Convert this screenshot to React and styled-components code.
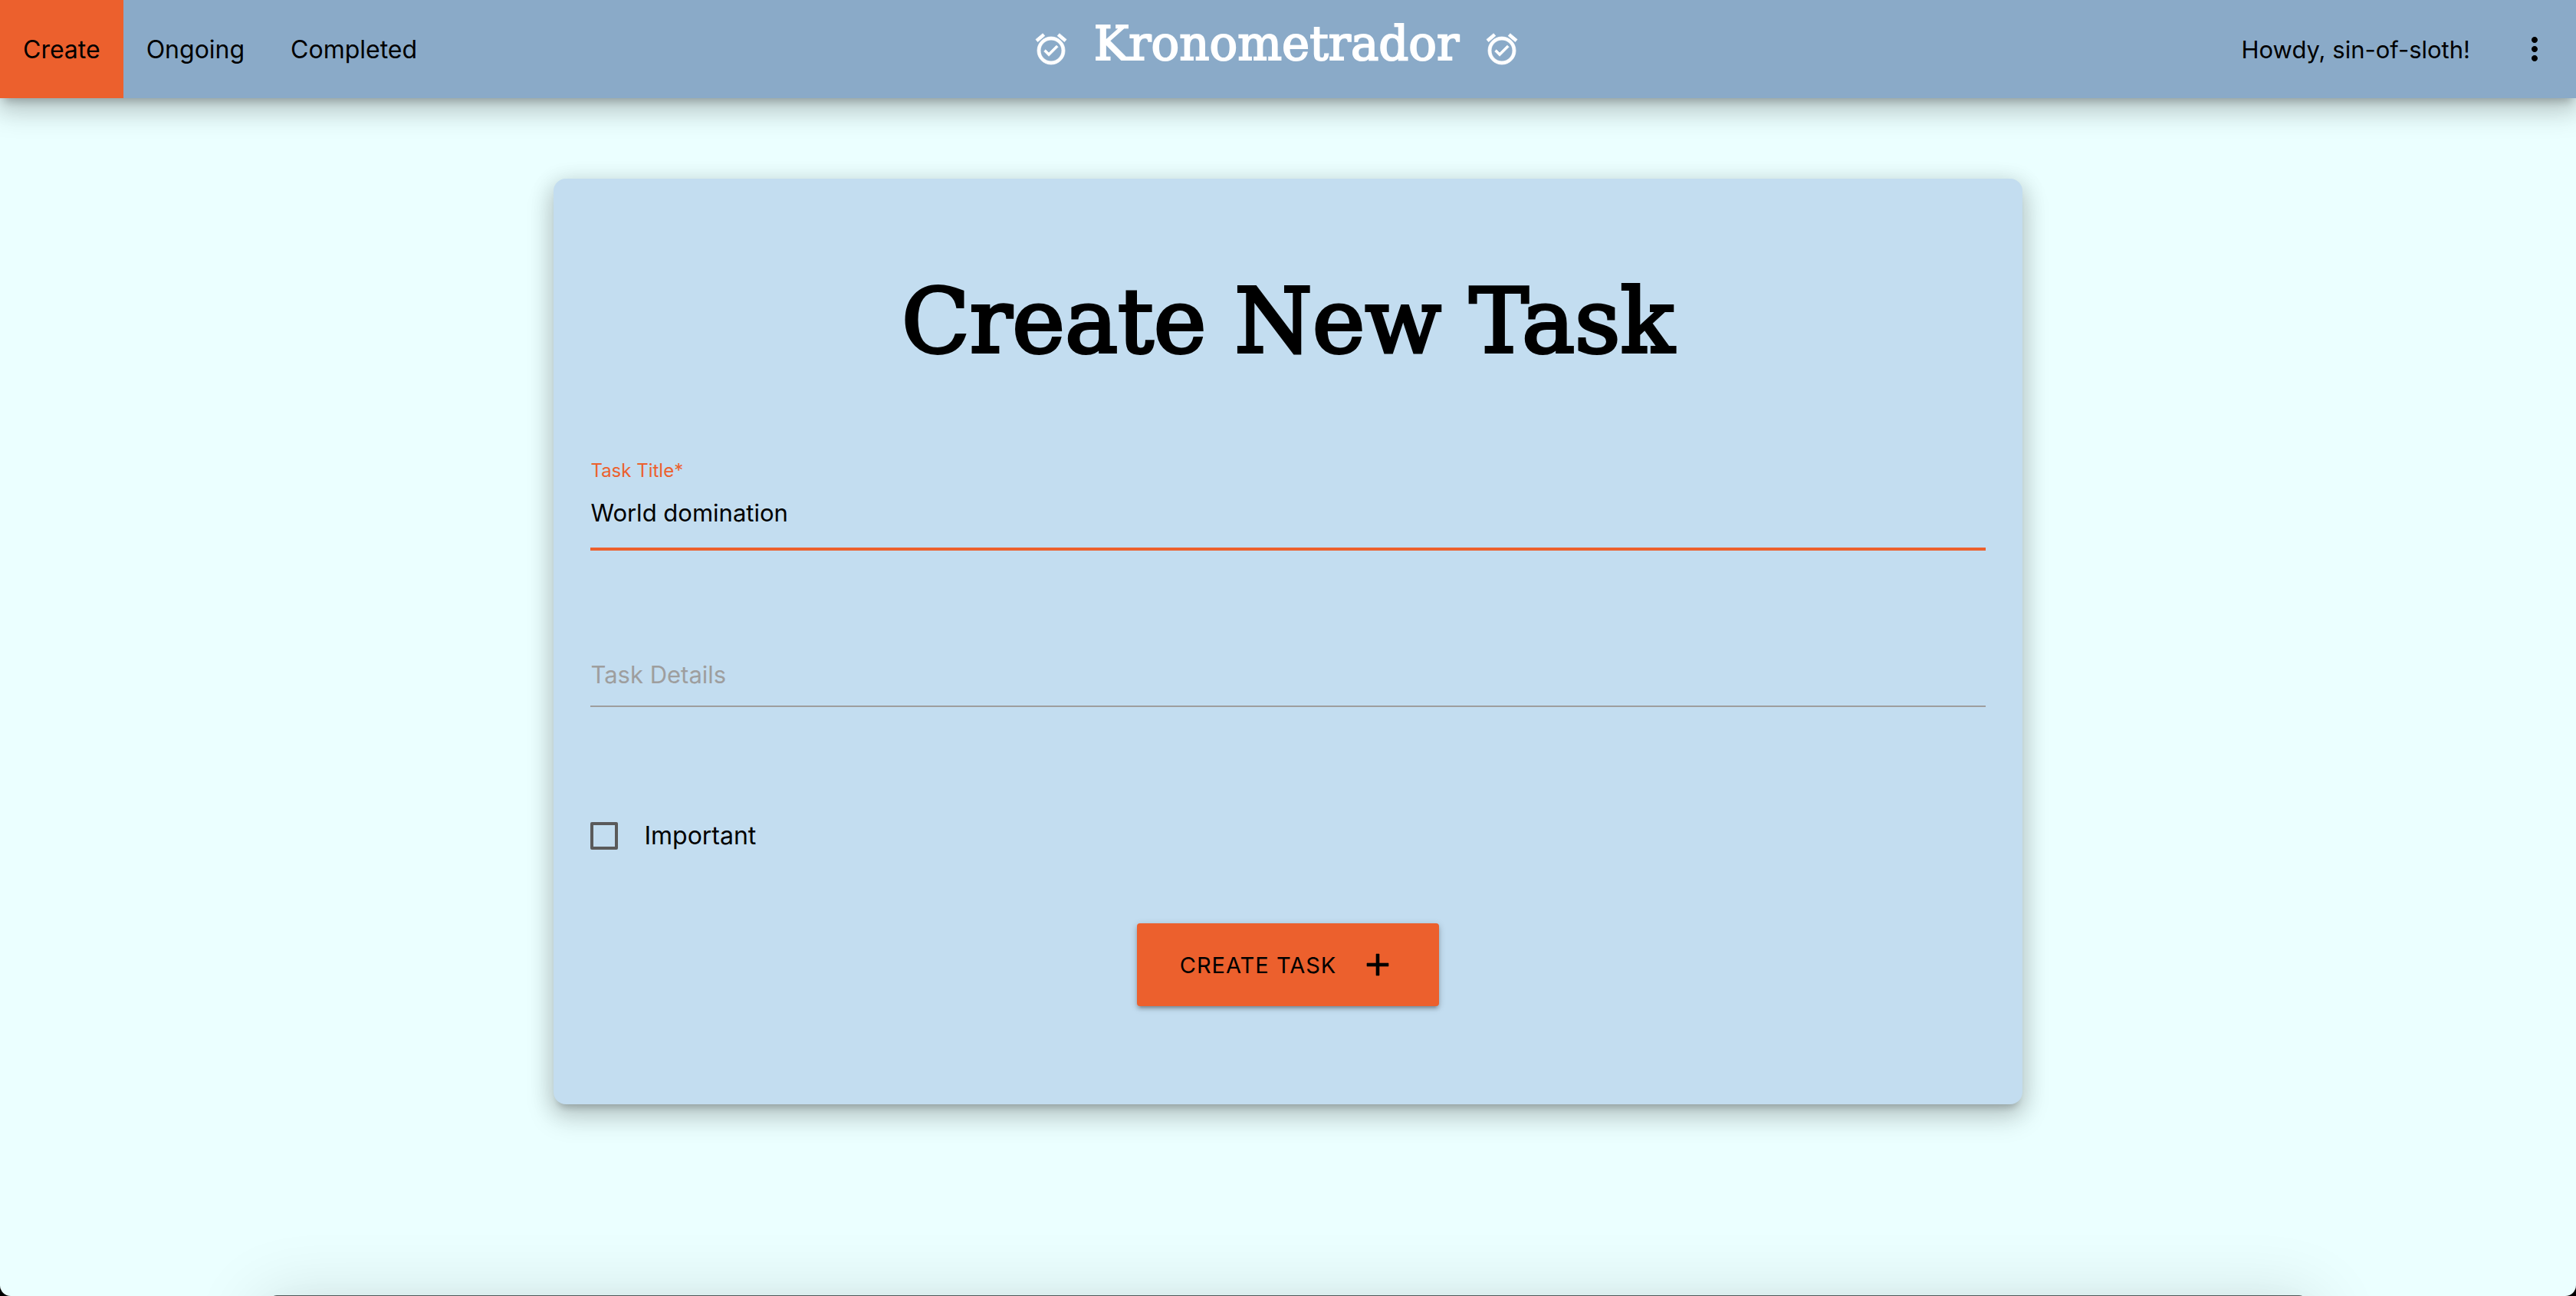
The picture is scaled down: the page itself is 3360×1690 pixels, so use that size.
import React, { useState } from "react";
import styled, { createGlobalStyle } from "styled-components";
import { MdAdd, MdAlarmOn, MdMoreVert } from "react-icons/md";

const color = {
  page: "#ebffff",
  bar: "#8aaac8",
  card: "#c3ddf0",
  accent: "#ec602d",
  muted: "#9e9e9e",
  box: "#5a5a5a",
};

const sans = `Inter, "Open Sans", sans-serif`;
const slab = `"DejaVu Serif", serif`;

const raised = `
  0 16px 34px 4px rgba(0, 0, 0, 0.14),
  0 6px 28px 4px rgba(0, 0, 0, 0.12),
  0 10px 10px -6px rgba(0, 0, 0, 0.2)`;

const GlobalStyle = createGlobalStyle`
  *, *::before, *::after { box-sizing: border-box; }
  html { background: #000; }
  body { margin: 0; font-family: ${sans}; font-size: 32px; color: #000; }
`;

const Page = styled.div`
  min-height: 100vh;
  display: flex;
  flex-direction: column;
  background: ${color.page};
  border-radius: 0 0 14px 14px;
  overflow: hidden;
`;

const Bar = styled.header`
  display: grid;
  grid-template-columns: 1fr auto 1fr;
  height: 128px;
  background: ${color.bar};
  box-shadow: ${raised};
`;

const Nav = styled.nav`
  display: flex;
`;

const NavLink = styled.a`
  display: flex;
  align-items: center;
  padding: 0 30px;
  color: #000;
  text-decoration: none;
  background: ${(p) => (p.$active ? color.accent : "transparent")};
`;

const Brand = styled.a`
  display: flex;
  align-items: center;
  gap: 32px;
  padding-right: 30px;
  color: #fff;
  text-decoration: none;
`;

const AlarmIcon = styled(MdAlarmOn)`
  width: 48px;
  height: 48px;
  stroke-width: 0.4px;

  [fill="none"] { stroke: none; }
`;

const BrandName = styled.span`
  padding-bottom: 16px;
  font-family: ${slab};
  font-size: 61px;
  -webkit-text-stroke: 2px currentColor;
`;

const Account = styled.div`
  display: flex;
  justify-content: flex-end;
`;

const Greeting = styled.span`
  display: flex;
  align-items: center;
  padding: 0 30px;
  font-size: 31px;
`;

const MenuButton = styled.button`
  display: flex;
  align-items: center;
  padding: 0 30px;
  border: 0;
  background: none;
  color: #000;
`;

const Main = styled.main`
  display: flex;
  justify-content: center;
  padding: 105px 0;
`;

const Card = styled.form`
  width: 57%;
  display: flex;
  flex-direction: column;
  padding: 114px 48px 128px;
  border-radius: 16px;
  background: ${color.card};
  box-shadow: ${raised};
`;

const Title = styled.h1`
  margin: 0 0 107px;
  font-family: ${slab};
  font-size: 116px;
  font-weight: 400;
  line-height: 144px;
  text-align: center;
  -webkit-text-stroke: 4px currentColor;
`;

const Field = styled.div`
  display: grid;
  margin-bottom: ${(p) => p.$gap}px;
`;

const FloatingLabel = styled.label`
  grid-area: 1 / 1;
  align-self: start;
  font-size: 24px;
  line-height: 32px;
  color: ${color.accent};
`;

const RestingLabel = styled.label`
  grid-area: 1 / 1;
  align-self: end;
  padding-bottom: 24px;
  font-size: 31px;
  line-height: 36px;
  color: ${color.muted};
  pointer-events: none;
`;

const TextInput = styled.input`
  grid-area: 1 / 1;
  width: 100%;
  height: 120px;
  padding: 24px 0 0;
  border: 0;
  border-bottom: ${(p) => (p.$active ? `4px solid ${color.accent}` : `2px solid ${color.muted}`)};
  outline: 0;
  background: none;
  font-family: ${sans};
  font-size: 31px;
  color: #000;
`;

const CheckRow = styled.label`
  display: flex;
  align-items: center;
  gap: 34px;
  line-height: 40px;
`;

const Checkbox = styled.input`
  appearance: none;
  width: 36px;
  height: 36px;
  margin: 0;
  border: 4px solid ${color.box};
  border-radius: 2px;

  &:checked { background: ${color.accent}; }
`;

const SubmitButton = styled.button`
  align-self: center;
  display: flex;
  align-items: center;
  gap: 30px;
  height: 108px;
  margin-top: 94px;
  padding: 0 56px;
  border: 0;
  border-radius: 4px;
  background: ${color.accent};
  box-shadow:
    0 4px 4px 0 rgba(0, 0, 0, 0.14),
    0 6px 2px -4px rgba(0, 0, 0, 0.12),
    0 2px 10px 0 rgba(0, 0, 0, 0.2);
  font-family: ${sans};
  font-size: 29px;
  letter-spacing: 1px;
  text-transform: uppercase;
  color: #000;
`;

const PlusIcon = styled(MdAdd)`
  width: 48px;
  height: 48px;
  stroke-width: 0.3px;

  [fill="none"] { stroke: none; }
`;

const BottomSheet = styled.aside`
  position: fixed;
  top: calc(100vh - 1px);
  left: 0;
  right: 0;
  width: 79%;
  height: 400px;
  margin: 0 auto;
  border-radius: 8px;
  background: #4f5858;
  box-shadow:
    0 48px 76px 6px rgba(0, 0, 0, 0.14),
    0 18px 92px 16px rgba(0, 0, 0, 0.12),
    0 22px 30px -14px rgba(0, 0, 0, 0.2);
`;

const links = ["Create", "Ongoing", "Completed"];

export default function App() {
  const [title, setTitle] = useState("World domination");
  const [details, setDetails] = useState("");

  return (
    <>
      <GlobalStyle />
      <Page>
        <Bar>
          <Nav>
            {links.map((name) => (
              <NavLink key={name} href={`#${name.toLowerCase()}`} $active={name === "Create"}>
                {name}
              </NavLink>
            ))}
          </Nav>
          <Brand href="#home">
            <AlarmIcon />
            <BrandName>Kronometrador</BrandName>
            <AlarmIcon />
          </Brand>
          <Account>
            <Greeting>Howdy, sin-of-sloth!</Greeting>
            <MenuButton type="button" aria-label="Menu">
              <MdMoreVert size={48} />
            </MenuButton>
          </Account>
        </Bar>
        <Main>
          <Card onSubmit={(e) => e.preventDefault()}>
            <Title>Create New Task</Title>
            <Field $gap={84}>
              <FloatingLabel htmlFor="title">Task Title*</FloatingLabel>
              <TextInput id="title" $active value={title} onChange={(e) => setTitle(e.target.value)} />
            </Field>
            <Field $gap={148}>
              {!details && <RestingLabel htmlFor="details">Task Details</RestingLabel>}
              <TextInput
                id="details"
                aria-label="Task Details"
                value={details}
                onChange={(e) => setDetails(e.target.value)}
              />
            </Field>
            <CheckRow>
              <Checkbox type="checkbox" />
              Important
            </CheckRow>
            <SubmitButton type="submit">
              Create Task
              <PlusIcon />
            </SubmitButton>
          </Card>
        </Main>
        <BottomSheet />
      </Page>
    </>
  );
}
